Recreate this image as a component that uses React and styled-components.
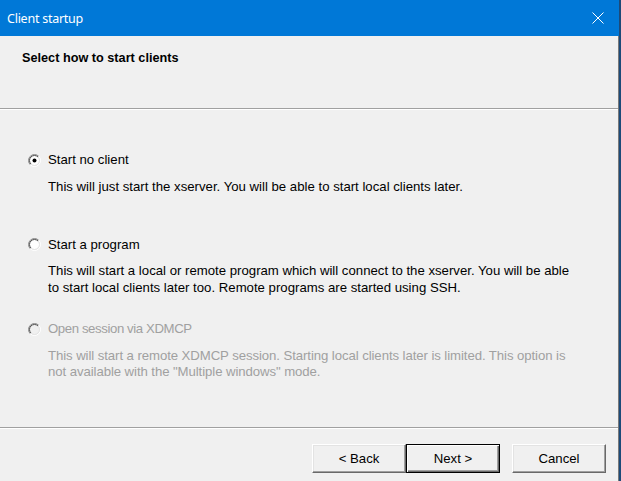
import React from "react";
import styled, { createGlobalStyle } from "styled-components";

const Global = createGlobalStyle`
  html, body { margin: 0; padding: 0; }
  body {
    background: #1d4a78;
    width: 621px;
    height: 481px;
    overflow: hidden;
  }
`;

const Window = styled.div`
  width: 619px;
  height: 481px;
  display: flex;
  flex-direction: column;
  background: #f0f0f0;
  font-family: "Liberation Sans", Arial, sans-serif;
  font-size: 13.2px;
  color: #000;
`;

const TitleBar = styled.div`
  height: 36px;
  flex: 0 0 36px;
  background: #0078d7;
  display: flex;
  align-items: center;
  justify-content: space-between;
  padding: 0 15px 0 7px;
  box-sizing: border-box;
`;

const TitleText = styled.span`
  font-family: "Noto Sans", "Open Sans", sans-serif;
  font-size: 12.5px;
  letter-spacing: -0.25px;
  color: #fff;
`;

const Content = styled.div`
  flex: 1;
  display: flex;
  flex-direction: column;
  border-right: 1px solid #7a7a7a;
`;

const Header = styled.div`
  height: 72px;
  box-sizing: border-box;
  padding: 14px 0 0 22px;
`;

const HeaderTitle = styled.div`
  font-weight: bold;
  font-size: 12.7px;
  line-height: 16px;
`;

const Separator = styled.div`
  height: 1px;
  background: #a0a0a0;
  border-bottom: 1px solid #ffffff;
`;

const Body = styled.div`
  flex: 1;
  padding: 42px 0 0 28px;
  display: flex;
  flex-direction: column;
`;

const Option = styled.div`
  height: 84.5px;
  display: flex;
  flex-direction: column;
  color: ${(p) => (p.$disabled ? "#a0a0a0" : "#000")};
  letter-spacing: ${(p) => (p.$disabled ? "-0.08px" : "normal")};
`;

const Label = styled.label`
  display: flex;
  align-items: center;
  gap: 7px;
  height: 16px;
  line-height: 16px;
  letter-spacing: ${(p) => (p.$disabled ? "-0.4px" : "normal")};
`;

const Desc = styled.div`
  margin: 10.5px 0 0 20px;
  line-height: 16.5px;
`;

const Footer = styled.div`
  display: flex;
  justify-content: flex-end;
  align-items: flex-start;
  padding: 15px 12px 8px 0;
`;

const Button = styled.button`
  width: 94px;
  height: 29px;
  margin-left: ${(p) => p.$gap || 0}px;
  box-sizing: border-box;
  background: #f0f0f0;
  font-family: "Liberation Sans", Arial, sans-serif;
  font-size: 13.2px;
  color: #000;
  padding: 0;
  border: 1px solid;
  border-color: ${(p) =>
    p.$default ? "#000 #000 #000 #000" : "#ffffff #696969 #696969 #ffffff"};
  box-shadow: ${(p) =>
    p.$default
      ? "inset 1px 1px #ffffff, inset -1px -1px #696969, inset -2px -2px #a0a0a0"
      : "inset -1px -1px #a0a0a0, inset 1px 1px #e3e3e3"};
`;

function Radio({ checked, disabled }) {
  return (
    <svg width="13" height="13" viewBox="0 0 13 13">
      <circle cx="6.5" cy="6.5" r="4.6" fill={disabled ? "#f0f0f0" : "#ffffff"} />
      <path d="M2.257 10.743 A6 6 0 0 1 10.743 2.257" fill="none" stroke="#8a8a8a" strokeWidth="1" />
      <path d="M10.743 2.257 A6 6 0 0 1 2.257 10.743" fill="none" stroke="#ffffff" strokeWidth="1" />
      <path d="M2.964 10.036 A5 5 0 0 1 10.036 2.964" fill="none" stroke="#505050" strokeWidth="1" />
      <path d="M10.036 2.964 A5 5 0 0 1 2.964 10.036" fill="none" stroke="#e3e3e3" strokeWidth="1" />
      {checked && <circle cx="6.5" cy="6.5" r="2" fill="#000" />}
    </svg>
  );
}

function CloseIcon() {
  return (
    <svg width="12" height="12" viewBox="0 0 12 12">
      <path d="M0.5 0.5 L11.5 11.5 M11.5 0.5 L0.5 11.5" stroke="#fff" strokeWidth="1" />
    </svg>
  );
}

export default function App() {
  return (
    <>
      <Global />
      <Window>
        <TitleBar>
          <TitleText>Client startup</TitleText>
          <CloseIcon />
        </TitleBar>
        <Content>
          <Header>
            <HeaderTitle>Select how to start clients</HeaderTitle>
          </Header>
          <Separator />
          <Body>
            <Option>
              <Label>
                <Radio checked />
                Start no client
              </Label>
              <Desc>This will just start the xserver. You will be able to start local clients later.</Desc>
            </Option>
            <Option>
              <Label>
                <Radio />
                Start a program
              </Label>
              <Desc>
                This will start a local or remote program which will connect to the xserver. You will be able
                <br />
                to start local clients later too. Remote programs are started using SSH.
              </Desc>
            </Option>
            <Option $disabled>
              <Label $disabled>
                <Radio disabled />
                Open session via XDMCP
              </Label>
              <Desc>
                This will start a remote XDMCP session. Starting local clients later is limited. This option is
                <br />
                not available with the "Multiple windows" mode.
              </Desc>
            </Option>
          </Body>
          <Separator />
          <Footer>
            <Button>&lt; Back</Button>
            <Button $default>Next &gt;</Button>
            <Button $gap={12}>Cancel</Button>
          </Footer>
        </Content>
      </Window>
    </>
  );
}
